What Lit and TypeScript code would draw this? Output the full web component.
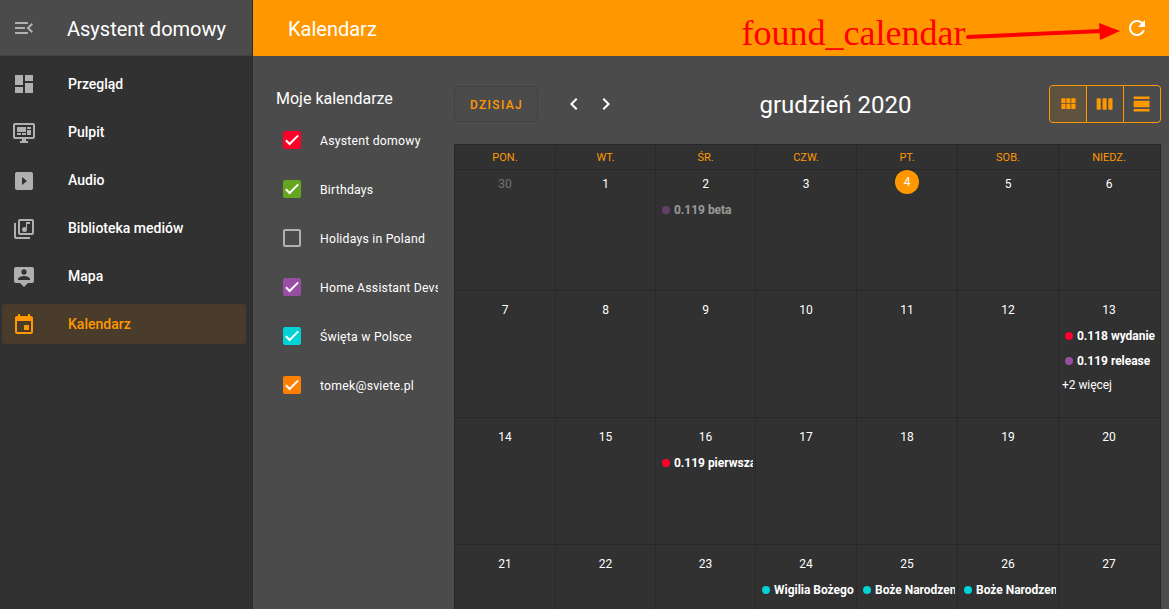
import { LitElement, html, css, svg, nothing } from "lit";
import { customElement } from "lit/decorators.js";
import { classMap } from "lit/directives/class-map.js";
import { styleMap } from "lit/directives/style-map.js";

const icons = {
  menuOpen:
    "M21,15.61L19.59,17L14.58,12L19.59,7L21,8.39L17.44,12L21,15.61M3,6H16V8H3V6M3,13V11H13V13H3M3,18V16H16V18H3Z",
  dashboard: "M13,3V9H21V3M13,21H21V11H13M3,21H11V15H3M3,13H11V3H3V13Z",
  monitor:
    "M21,16V4H3V16H21M21,2A2,2 0 0,1 23,4V16A2,2 0 0,1 21,18H14V20H16V22H8V20H10V18H3C1.89,18 1,17.1 1,16V4C1,2.89 1.89,2 3,2H21M5,6H14V11H5V6M15,6H19V8H15V6M19,9V14H15V9H19M5,12H9V14H5V12M10,12H14V14H10V12Z",
  play: "M10,16V8L15,12M19,3H5C3.89,3 3,3.89 3,5V19A2,2 0 0,0 5,21H19A2,2 0 0,0 21,19V5C21,3.89 20.1,3 19,3Z",
  music:
    "M4,6H2V20A2,2 0 0,0 4,22H18V20H4V6M20,2H8A2,2 0 0,0 6,4V16A2,2 0 0,0 8,18H20A2,2 0 0,0 22,16V4A2,2 0 0,0 20,2M20,16H8V4H20V16M12.5,15A2.5,2.5 0 0,0 15,12.5V7H18V5H14V10.5C13.58,10.19 13.07,10 12.5,10A2.5,2.5 0 0,0 12.5,15Z",
  map: "M20,2H4A2,2 0 0,0 2,4V16A2,2 0 0,0 4,18H8L12,22L16,18H20A2,2 0 0,0 22,16V4A2,2 0 0,0 20,2M12,4.3C13.5,4.3 14.7,5.5 14.7,7C14.7,8.5 13.5,9.7 12,9.7C10.5,9.7 9.3,8.5 9.3,7C9.3,5.5 10.5,4.3 12,4.3M18,15H6V14.1C6,12.1 10,11 12,11C14,11 18,12.1 18,14.1V15Z",
  calendar:
    "M19,19H5V8H19M16,1V3H8V1H6V3H5C3.89,3 3,3.89 3,5V19A2,2 0 0,0 5,21H19A2,2 0 0,0 21,19V5C21,3.89 20.1,3 19,3H18V1M17,12H12V17H17V12Z",
  refresh:
    "M17.65,6.35C16.2,4.9 14.21,4 12,4A8,8 0 0,0 4,12A8,8 0 0,0 12,20C15.73,20 18.84,17.45 19.73,14H17.65C16.83,16.33 14.61,18 12,18A6,6 0 0,1 6,12A6,6 0 0,1 12,6C13.66,6 15.14,6.69 16.22,7.78L13,11H20V4L17.65,6.35Z",
  left: "M15.41,16.58L10.83,12L15.41,7.41L14,6L8,12L14,18L15.41,16.58Z",
  right: "M8.59,16.58L13.17,12L8.59,7.41L10,6L16,12L10,18L8.59,16.58Z",
  viewMonth:
    "M16,5V11H21V5M10,11H15V5H10M16,18H21V12H16M10,18H15V12H10M4,18H9V12H4M4,11H9V5H4V11Z",
  viewWeek:
    "M13,5H10A1,1 0 0,0 9,6V18A1,1 0 0,0 10,19H13A1,1 0 0,0 14,18V6A1,1 0 0,0 13,5M20,5H17A1,1 0 0,0 16,6V18A1,1 0 0,0 17,19H20A1,1 0 0,0 21,18V6A1,1 0 0,0 20,5M6,5H3A1,1 0 0,0 2,6V18A1,1 0 0,0 3,19H6A1,1 0 0,0 7,18V6A1,1 0 0,0 6,5Z",
  viewDay: "M2,3V6H21V3M20,8H3A1,1 0 0,0 2,9V15A1,1 0 0,0 3,16H20A1,1 0 0,0 21,15V9A1,1 0 0,0 20,8M2,21H21V18H2V21Z",
};

const icon = (d: string, size = 24) =>
  html`<svg viewBox="0 0 24 24" width=${size} height=${size}>${svg`<path fill="currentColor" d=${d}></path>`}</svg>`;

const menu = [
  { label: "Przegląd", icon: icons.dashboard },
  { label: "Pulpit", icon: icons.monitor },
  { label: "Audio", icon: icons.play },
  { label: "Biblioteka mediów", icon: icons.music },
  { label: "Mapa", icon: icons.map },
  { label: "Kalendarz", icon: icons.calendar, active: true },
];

const calendars = [
  { name: "Asystent domowy", color: "#ff0029" },
  { name: "Birthdays", color: "#66a61e" },
  { name: "Holidays in Poland", color: "" },
  { name: "Home Assistant Devs", color: "#984ea3" },
  { name: "Święta w Polsce", color: "#00d2d5" },
  { name: "tomek@sviete.pl", color: "#ff7f00" },
];

interface Entry {
  title: string;
  color: string;
  past?: boolean;
}
interface Day {
  n: number;
  other?: boolean;
  today?: boolean;
  events?: Entry[];
  more?: string;
}

const days: Day[] = [30, ...Array.from({ length: 27 }, (_, i) => i + 1)].map((n, i) => ({
  n,
  other: i === 0,
  today: i === 4,
}));
days[2].events = [{ title: "0.119 beta", color: "#984ea3", past: true }];
days[13].events = [
  { title: "0.118 wydanie", color: "#ff0029" },
  { title: "0.119 release", color: "#984ea3" },
];
days[13].more = "+2 więcej";
days[16].events = [{ title: "0.119 pierwsza", color: "#ff0029" }];
days[24].events = [{ title: "Wigilia Bożego", color: "#00d2d5" }];
days[25].events = [{ title: "Boże Narodzenie", color: "#00d2d5" }];
days[26].events = [{ title: "Boże Narodzenie", color: "#00d2d5" }];

@customElement("ha-side-menu")
class SideMenu extends LitElement {
  static styles = css`
    :host {
      display: flex;
      flex-direction: column;
      box-sizing: border-box;
      background: #313131;
      border-right: 1px solid #2b2b2b;
      color: #fff;
    }
    svg { display: block; flex: none; }
    .head {
      display: flex;
      align-items: center;
      box-sizing: border-box;
      height: 56px;
      padding: 0 12px 0 12px;
      gap: 31px;
      background: #4b4b4b;
      border-bottom: 1px solid #424242;
      color: #b0b0b0;
    }
    .title { font-size: 20px; color: #fff; white-space: nowrap; padding-top: 2px; }
    .list { display: flex; flex-direction: column; gap: 8px; padding: 8px 6px 0 2px; }
    .item {
      display: flex;
      align-items: center;
      height: 40px;
      padding-left: 10px;
      gap: 32px;
      border-radius: 4px;
      font-size: 14px;
      font-weight: 500;
      color: #fff;
    }
    .item svg { color: #b0b0b0; padding-top: 1px; }
    .item:first-child svg { padding-top: 0; }
    .item.active svg { color: #ff9800; }
    .active { background: #4a3c2a; color: #ff9800; }
  `;
  render() {
    return html`
      <div class="head">${icon(icons.menuOpen)}<span class="title">Asystent domowy</span></div>
      <div class="list">
        ${menu.map(
          (m) => html`<div class=${classMap({ item: true, active: !!m.active })}>
            ${icon(m.icon)}<span>${m.label}</span>
          </div>`
        )}
      </div>
    `;
  }
}

@customElement("ha-calendar-list")
class CalendarList extends LitElement {
  static styles = css`
    :host { display: block; padding: 31px 16px 0 23px; color: #fff; }
    .title { font-size: 16px; line-height: 24px; white-space: nowrap; }
    .list { display: flex; flex-direction: column; padding: 5px 0 0 7px; }
    .row { display: flex; align-items: center; height: 49px; gap: 19px; }
    .box {
      flex: none;
      display: block;
      box-sizing: border-box;
      width: 18px;
      height: 18px;
      margin-bottom: 1px;
      border-radius: 2px;
    }
    .empty { border: 2px solid #b0b0b0; }
    .name {
      font-size: 12.25px;
      line-height: 20px;
      letter-spacing: 0.22px;
      white-space: nowrap;
      overflow: hidden;
    }
    svg { display: block; }
  `;
  render() {
    return html`
      <div class="title">Moje kalendarze</div>
      <div class="list">
        ${calendars.map(
          (c) => html`<div class="row">
            <span class=${classMap({ box: true, empty: !c.color })} style=${styleMap({ background: c.color || "transparent" })}>
              ${c.color
                ? html`<svg viewBox="0 0 18 18" width="18" height="18">
                    <path d="M2.9 9.3L6.6 13L15.2 4.4" fill="none" stroke="#fff" stroke-width="2"></path>
                  </svg>`
                : nothing}
            </span>
            <span class="name">${c.name}</span>
          </div>`
        )}
      </div>
    `;
  }
}

@customElement("ha-month-view")
class MonthView extends LitElement {
  static styles = css`
    :host { display: flex; flex-direction: column; padding: 29px 8px 0 0; min-width: 0; color: #fff; }
    svg { display: block; }
    .bar {
      display: flex;
      align-items: center;
      justify-content: space-between;
      height: 38px;
      margin-bottom: 21px;
    }
    .nav { display: flex; align-items: center; }
    .today-btn {
      box-sizing: border-box;
      width: 84px;
      height: 36px;
      line-height: 36px;
      border: 1px solid #404040;
      border-radius: 4px;
      text-align: center;
      text-indent: 1px;
      color: #ff9800;
      font-size: 12px;
      font-weight: 500;
      letter-spacing: 1.35px;
      margin-right: 24px;
    }
    .arrows { display: flex; gap: 8px; }
    .month { font-size: 24px; white-space: nowrap; padding: 2px 0 0 4px; }
    .views {
      display: grid;
      grid-template-columns: 36px 36px 36px;
      gap: 1px;
      background: #ff9800;
      border: 1px solid #ff9800;
      border-radius: 4px;
      overflow: hidden;
      height: 36px;
      color: #ff9800;
    }
    .view { display: grid; place-items: center; background: #4b4b4b; }
    .on { background: #5f523f; }
    .grid {
      display: grid;
      grid-template-columns: 101px 100px 100px 101px 101px 101px 101px;
      grid-template-rows: 25px 121px 127px 127px 127px;
      border: 1px solid #272727;
      border-width: 1px 1px 0 1px;
      background: #313131;
      width: 705px;
    }
    .dow, .day {
      box-sizing: border-box;
      min-width: 0;
      border-right: 1px solid #282828;
      border-bottom: 1px solid #282828;
      text-align: center;
    }
    .last { border-right: 0; }
    .dow { font-size: 11px; line-height: 25px; color: #ff9800; }
    .dow.last { padding-right: 1px; }
    .day { font-size: 12px; padding: 9px 2px 0 6px; }
    .day.last { padding-right: 3px; }
    .first { padding-top: 4px; }
    .num { display: block; height: 20px; line-height: 20px; margin-left: -4px; }
    .other { opacity: 0.3; }
    .today {
      width: 24px;
      height: 24px;
      line-height: 24px;
      border-radius: 50%;
      background: #ff9800;
      margin: -4px auto 0;
      transform: translateX(-2px);
    }
    .event {
      display: flex;
      align-items: center;
      height: 25px;
      gap: 4px;
      font-weight: 700;
    }
    .num + .event { margin-top: 3px; }
    .dot { flex: none; width: 8px; height: 8px; border-radius: 50%; }
    .label { overflow: hidden; white-space: nowrap; line-height: 20px; letter-spacing: -0.02px; }
    .past { opacity: 0.5; }
    .more { text-align: left; line-height: 24px; margin-left: -3px; letter-spacing: -0.05px; }
  `;
  render() {
    return html`
      <div class="bar">
        <div class="nav">
          <div class="today-btn">DZISIAJ</div>
          <div class="arrows">${icon(icons.left)}${icon(icons.right)}</div>
        </div>
        <div class="month">grudzień 2020</div>
        <div class="views">
          <div class="view on">${icon(icons.viewMonth, 20)}</div>
          <div class="view">${icon(icons.viewWeek, 20)}</div>
          <div class="view">${icon(icons.viewDay, 20)}</div>
        </div>
      </div>
      <div class="grid">
        ${["PON.", "WT.", "ŚR.", "CZW.", "PT.", "SOB.", "NIEDZ."].map(
          (d, i) => html`<div class=${classMap({ dow: true, last: i === 6 })}>${d}</div>`
        )}
        ${days.map(
          (d, i) => html`<div class=${classMap({ day: true, first: i < 7, last: i % 7 === 6 })}>
            <span class=${classMap({ num: true, other: !!d.other, today: !!d.today })}>${d.n}</span>
            ${(d.events ?? []).map(
              (e) => html`<div class=${classMap({ event: true, past: !!e.past })}>
                <span class="dot" style=${styleMap({ background: e.color })}></span>
                <span class="label">${e.title}</span>
              </div>`
            )}
            ${d.more ? html`<div class="more">${d.more}</div>` : nothing}
          </div>`
        )}
      </div>
    `;
  }
}

@customElement("app-root")
class AppRoot extends LitElement {
  static styles = css`
    :host {
      display: grid;
      grid-template-columns: 253px 1fr;
      position: relative;
      height: 609px;
      overflow: hidden;
      background: #4b4b4b;
      font-family: Roboto, "Noto Sans", sans-serif;
    }
    .main { min-width: 0; display: flex; flex-direction: column; }
    .top {
      display: flex;
      align-items: center;
      justify-content: space-between;
      box-sizing: border-box;
      height: 56px;
      flex: none;
      padding: 0 20px 0 35px;
      background: #ff9800;
      color: #fff;
      font-size: 20px;
    }
    .heading { padding-top: 2px; }
    .content { display: grid; grid-template-columns: 201px 1fr; flex: 1; min-height: 0; }
    svg { display: block; }
    .note {
      position: absolute;
      left: 741.5px;
      top: 11px;
      color: #f00;
      font: 36px/44px "Liberation Serif", serif;
      white-space: nowrap;
    }
    .arrow { position: absolute; left: 960px; top: 16px; }
  `;
  render() {
    return html`
      <ha-side-menu></ha-side-menu>
      <div class="main">
        <div class="top"><span class="heading">Kalendarz</span>${icon(icons.refresh)}</div>
        <div class="content">
          <ha-calendar-list></ha-calendar-list>
          <ha-month-view></ha-month-view>
        </div>
      </div>
      <div class="note">found_calendar</div>
      <svg class="arrow" width="164" height="32" viewBox="0 0 164 32">
        <path d="M8 21L142 15" stroke="#f00" stroke-width="4" stroke-linecap="round"></path>
        <path d="M139 7L160 15L140 24Z" fill="#f00"></path>
      </svg>
    `;
  }
}
